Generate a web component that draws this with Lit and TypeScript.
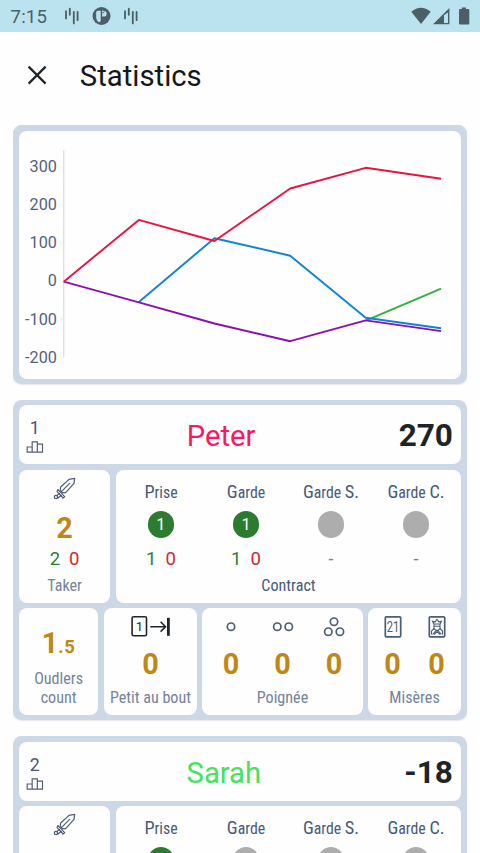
import { LitElement, html, svg, css } from "lit";
import { customElement, property } from "lit/decorators.js";

interface Contract { name: string; used: number; won?: number; lost?: number }
interface Player { rank: number; name: string; tone: string; score: string; contracts: Contract[] }

const players: Player[] = [
  {
    rank: 1, name: "Peter", tone: "pink", score: "270",
    contracts: [
      { name: "Prise", used: 1, won: 1, lost: 0 },
      { name: "Garde", used: 1, won: 1, lost: 0 },
      { name: "Garde S.", used: 0 },
      { name: "Garde C.", used: 0 },
    ],
  },
  {
    rank: 2, name: "Sarah", tone: "lime", score: "-18",
    contracts: [
      { name: "Prise", used: 1, won: 1, lost: 0 },
      { name: "Garde", used: 0 },
      { name: "Garde S.", used: 0 },
      { name: "Garde C.", used: 0 },
    ],
  },
];

const card = css`
  .card { background: #cdd8e7; border-radius: 8.5px; padding: 5.5px; box-sizing: border-box; box-shadow: 0 1px 1px rgba(120,130,150,.18); }
  .cell { background: #fefefe; border-radius: 8px; box-sizing: border-box; }
`;

@customElement("status-bar")
class StatusBar extends LitElement {
  static styles = css`
    :host { display: flex; align-items: center; height: 32px; background: #bbe3ef; box-sizing: border-box; padding: 0 10px 0 10.5px; color: #4b5f66; }
    .time { font: 400 18.6px/32px Roboto, sans-serif; letter-spacing: .2px; width: 53px; padding-top: 1px; }
    svg { display: block; flex: none; }
    .grow { flex: 1; }
    .disc { margin: 0 12px 0 12px; }
  `;
  bars() {
    return html`<svg width="16" height="18" viewBox="0 0 16 18" fill="none" stroke="#4b5f66" stroke-width="1.8" stroke-linecap="round"><path d="M2 4.2V11.4M5.8 1.6V7.8M9.8 4.8V16.4M13.6 5V13.2"/></svg>`;
  }
  render() {
    return html`<span class="time">7:15</span>${this.bars()}
      <svg class="disc" width="19" height="18" viewBox="0 0 19 18"><circle cx="9.5" cy="9" r="9" fill="#4b5f66"/><path d="M4.200 5.600Q4.200 3.800 5.800 3.800H8.700V13.200Q8.700 15.200 6.600 15.200Q4.200 13.500 4.200 10.500Z" fill="#bbe3ef"/><path d="M10.200 6.200H10.600A1.700 1.700 0 0 0 12.200 3.700A3 3 0 0 1 12.400 9.600H10.200Z" fill="#bbe3ef"/><circle cx="10.800" cy="4.600" r="1" fill="#bbe3ef"/></svg>
      ${this.bars()}<span class="grow"></span>
      <svg width="60" height="20" viewBox="0 0 60 20" fill="#4b5f66"><path d="M1.300 5.700Q11-2 20.700 5.700L11 18Z"/><path fill-rule="evenodd" d="M39.400 2V18.200H23ZM38 6.400L34 9.300V16.900H38Z"/><path d="M51.800 1.400H56V3H58.400Q59.300 3 59.300 4V17.400Q59.300 18.400 58.400 18.400H50Q49 18.400 49 17.400V4Q49 3 50 3H51.800Z"/></svg>`;
  }
}

@customElement("score-chart")
class ScoreChart extends LitElement {
  static styles = [card, css`
    :host { display: block; }
    .card { height: 259px; }
    .cell { height: 248px; }
    svg { display: block; width: 443px; height: 248px; }
    text { font: 400 16.2px Roboto, sans-serif; fill: #52637c; text-anchor: end; }
  `];
  render() {
    const series = [
      ["#2eb43c", "346.8,190.2 422.2,158.2"],
      ["#0f84d0", "120,171.4 195.5,107.7 271.3,125.2 346.8,187.2 422.2,197.7"],
      ["#8a0fb5", "44.8,151.2 120,171.8 195.5,193 271.3,210.7 346.8,189.9 422.2,200.6"],
      ["#ec1240", "44.8,151.2 120,89.4 195.5,110.5 271.3,58 346.8,37.3 422.2,48.2"],
    ];
    return html`<div class="card"><div class="cell"><svg viewBox="18.6 131 443 248">
      <path d="M63.3 150.5V357.5" stroke="#dedede" stroke-width="1.3"/>
      ${[300, 200, 100, 0, -100, -200].map((v, i) => svg`<text x="56.5" y=${172 + i * 38.15}>${v}</text><path d=${`M60.5 ${167.3 + i * 38}H63`} stroke="#f1f1f1"/>`)}
      <g transform="translate(18.5 130.5)">${series.map(([c, p]) => svg`<polyline points=${p} fill="none" stroke=${c} stroke-width="1.9" stroke-linejoin="round"/>`)}</g>
    </svg></div></div>`;
  }
}

@customElement("player-card")
class PlayerCard extends LitElement {
  @property({ attribute: false }) player!: Player;

  static styles = [card, css`
    :host { display: block; font-family: Roboto, sans-serif; }
    .card { display: flex; flex-direction: column; gap: 5.4px; height: 320.5px; }
    svg { display: block; }
    .cell { display: flex; flex-direction: column; align-items: center; min-width: 0; }
    .cell.head { display: grid; grid-template-columns: 17px 1fr auto; height: 59px; padding: 3px 8.3px 0 7.5px; }
    .rank { display: flex; flex-direction: column; align-items: center; font-size: 17.8px; line-height: 20px; color: #4a5672; }
    .rank svg { margin-top: 3px; }
    .name { text-align: center; font-size: 29.2px; line-height: 34px; }
    .pink { color: #fb1763; }
    .lime { color: #43e45b; }
    .score { font-size: 31.5px; line-height: 36px; font-weight: 700; color: #1d2429; }
    .row { display: grid; gap: 5.4px; }
    .mid { grid-template-columns: 91.6px 1fr; height: 133.4px; }
    .low { grid-template-columns: 79.6px 93.3px 1fr 93.3px; height: 106.1px; }
    .gold { color: #be8716; font-weight: 700; font-size: 28.8px; line-height: 34px; }
    .gold small { font-size: 18.5px; letter-spacing: .6px; }
    .pair { display: flex; justify-content: center; gap: 9px; font-size: 18.6px; line-height: 22px; }
    .won { color: #2e8034; }
    .lost { color: #cf2830; }
    .none { color: #808080; font-size: 18px; line-height: 22px; }
    .label { color: #75839a; font-size: 16.1px; line-height: 18.7px; font-stretch: 75%; font-family: "Roboto Condensed", Roboto, sans-serif; text-align: center; white-space: nowrap; }
    .dark { color: #465a79; }
    .sword { margin-top: 6px; }
    .sword + .gold { margin-top: 10px; }
    .taker .pair { margin-top: 3px; }
    .taker .label { margin-top: 7px; }
    .cols { display: flex; align-self: stretch; padding: 0 2.7px; }
    .col { flex: 1; display: flex; flex-direction: column; align-items: center; }
    .title { margin-top: 10.4px; color: #465a79; font-size: 15.8px; line-height: 24px; height: 24px; font-stretch: 75%; font-family: "Roboto Condensed", Roboto, sans-serif; white-space: nowrap; }
    .title b { font-weight: 400; font-size: 18.3px; }
    .dot { width: 26.7px; height: 26.7px; margin: 6.8px 0 10px; border-radius: 50%; background: #adadad; }
    .dot.on { background: #2b7c31; color: #fff; font-size: 16.4px; line-height: 27px; text-align: center; }
    .contract .label { margin-top: 7px; }
    .oudlers .gold { margin-top: 18px; }
    .oudlers .label { margin-top: 6px; }
    .icon { height: 26px; margin-top: 6px; }
    .icon + .gold { margin-top: 7px; }
    .low .last { margin-top: 7.2px; }
    .num { font: 400 14.5px Roboto, sans-serif; text-anchor: middle; }
    .petit { font: 400 13px Roboto, sans-serif; text-anchor: middle; }
  `];

  heading(name: string) {
    return name.split(" ").map((w, i) => html`${i ? " " : ""}<b>${w[0]}</b>${w[1] === "." ? html`<b>.</b>` : w.slice(1)}`);
  }

  stat(icon: unknown) {
    return html`<div class="col"><svg class="icon" width="40" height="26" viewBox="-20 0 40 26" fill="none" stroke="#4b5d78" stroke-width="1.7">${icon}</svg><span class="gold">0</span></div>`;
  }

  render() {
    const p = this.player;
    return html`<div class="card">
      <div class="cell head">
        <div class="rank"><span>${p.rank}</span>
          <svg width="18" height="13" viewBox="78 140 54 39" fill="none" stroke="#525f7b" stroke-width="3.6"><path d="M81.500 158H96.500V173.500H81.500ZM96.500 142.500H112V173.500H96.500ZM112 149.500H127.500V173.500H112Z"/></svg>
        </div>
        <div class="name ${p.tone}">${p.name}</div>
        <div class="score">${p.score}</div>
      </div>
      <div class="row mid">
        <div class="cell taker">
          <svg class="sword" width="25" height="25" viewBox="156 242 75 75" fill="none" stroke="#4d5c78" stroke-width="3.6" stroke-linejoin="round" stroke-linecap="round"><path d="M181 284L182 275L207 252L224 249L222 264L197 292L188 292ZM188 285L209 264M174 283L194 304M174 283L171 288L189 308L194 304M178 294L170 301M184 300L174 308"/><circle cx="168" cy="305" r="5"/></svg>
          <span class="gold">2</span>
          <div class="pair"><span class="won">2</span><span class="lost">0</span></div>
          <span class="label">Taker</span>
        </div>
        <div class="cell contract">
          <div class="cols">${p.contracts.map(c => html`<div class="col">
            <span class="title">${this.heading(c.name)}</span>
            ${c.used ? html`<span class="dot on">${c.used}</span><div class="pair"><span class="won">${c.won}</span><span class="lost">${c.lost}</span></div>`
              : html`<span class="dot"></span><span class="none">-</span>`}
          </div>`)}</div>
          <span class="label dark">Contract</span>
        </div>
      </div>
      <div class="row low">
        <div class="cell oudlers"><span class="gold">1<small>.5</small></span><span class="label">Oudlers<br>count</span></div>
        <div class="cell">
          <svg class="icon" width="40" height="26" viewBox="-0.800 0 40 26" fill="none" stroke="#20262c" stroke-width="1.6"><rect x="1.300" y="2.800" width="14.400" height="19" rx="1.500"/><path d="M19.500 12.700H34.500M29.800 7.800L34.700 12.700L29.800 17.600"/><path d="M37.600 3.800V21.800" stroke-width="2.800"/><text class="petit" x="8.500" y="17" fill="#20262c" stroke="none">1</text></svg>
          <span class="gold">0</span><span class="label last">Petit au bout</span>
        </div>
        <div class="cell">
          <div class="cols">
            ${this.stat(svg`<circle cx="0" cy="12.700" r="3.700"/>`)}
            ${this.stat(svg`<circle cx="-5.700" cy="12.700" r="3.700"/><circle cx="5.800" cy="12.700" r="3.700"/>`)}
            ${this.stat(svg`<circle cx="0" cy="7.700" r="3.700"/><circle cx="-5.700" cy="17.700" r="3.700"/><circle cx="5.900" cy="17.700" r="3.700"/>`)}
          </div><span class="label last">Poignée</span>
        </div>
        <div class="cell">
          <div class="cols">
            ${this.stat(svg`<rect x="-7.700" y="2.800" width="15.400" height="20" rx="1"/><text class="num" x="0" y="17.500" fill="#4b5d78" stroke="none" textLength="12.500" lengthAdjust="spacingAndGlyphs">21</text>`)}
            ${this.stat(svg`<rect x="-7.700" y="2.800" width="15.400" height="20" rx="1"/><path stroke-width="1.100" d="M-3.200 10L-4.500 7.200L-1.800 7.800L0 5.400L1.800 7.800L4.500 7.200L3.200 10ZM-3 10V14.500L-1 16.300H1L3 14.500V10M-3 12.300H3M-3 14.500L-5.500 17V20.500M3 14.500L5.500 17V20.500M-4.500 20.500L-1 16.500L3 20.500M4.500 20.500L1 16.500L-3 20.500"/>`)}
          </div><span class="label last">Misères</span>
        </div>
      </div>
    </div>`;
  }
}

@customElement("app-root")
class AppRoot extends LitElement {
  static styles = css`
    :host { display: block; height: 853px; overflow: hidden; background: #fefefe; }
    header { display: flex; align-items: center; height: 93px; padding-left: 27px; box-sizing: border-box; }
    header svg { display: block; margin: -7px 32.800px 0 0; }
    h1 { margin: -6px 0 0; font: 400 29.300px/36px Roboto, sans-serif; color: #15181b; }
    main { display: flex; flex-direction: column; gap: 15.800px; padding: 0 13.300px; }
  `;
  render() {
    return html`<status-bar></status-bar>
      <header><svg width="20" height="20" viewBox="0 0 20 20" fill="none" stroke="#1d252b" stroke-width="2.200"><path d="M1.600 1.600L18.600 18.600M18.600 1.600L1.600 18.600"/></svg><h1>Statistics</h1></header>
      <main><score-chart></score-chart>${players.map(p => html`<player-card .player=${p}></player-card>`)}</main>`;
  }
}
